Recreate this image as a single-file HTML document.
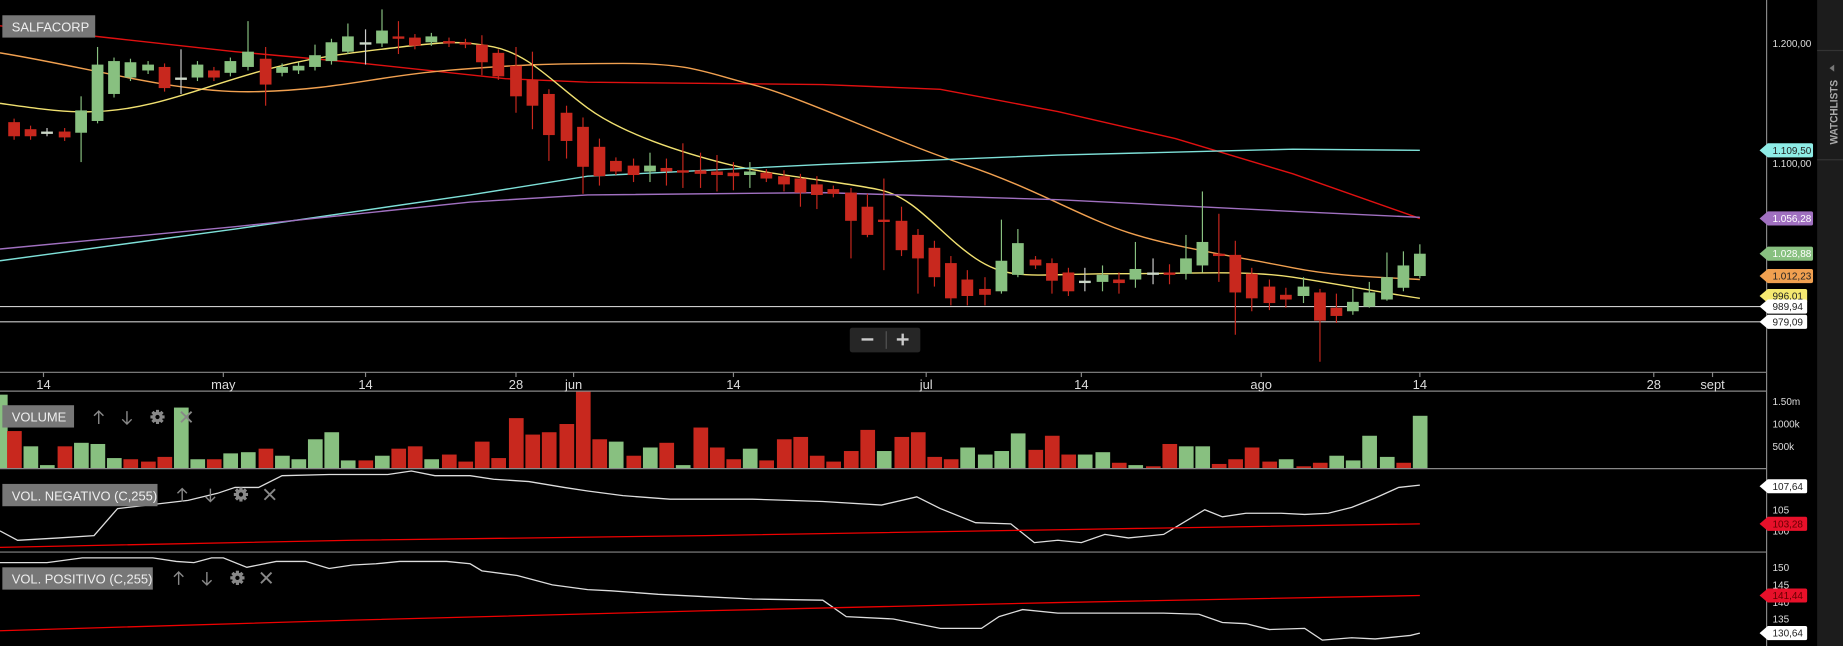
<!DOCTYPE html>
<html><head><meta charset="utf-8"><style>
html,body{margin:0;padding:0;background:#000;overflow:hidden}
svg{display:block}
text{font-family:"Liberation Sans",sans-serif}
</style></head><body>
<svg id="s" width="1843" height="646" viewBox="0 0 1568 550" preserveAspectRatio="none" xmlns="http://www.w3.org/2000/svg">
<rect width="1568" height="550" fill="#000"/>
<rect x="1546" y="0" width="22" height="550" fill="#1c1c1c"/>
<line x1="1546" y1="43" x2="1568" y2="43" stroke="#333"/>
<line x1="1546" y1="136" x2="1568" y2="136" stroke="#333"/>
<text transform="translate(1563.5,123) rotate(-90)" font-size="9" font-weight="bold" fill="#aaa" textLength="55" lengthAdjust="spacingAndGlyphs">WATCHLISTS</text>
<path d="M1556.5,58 l4,-3 v6z" fill="#777"/>
<g id="ma" fill="none" stroke-width="1.2">
<polyline stroke="#e01010" points="0,22 100,33 200,44 300,53 430,67 500,70 700,72 800,76 900,95 1000,118 1100,148 1208,186"/>
<path stroke="#f0a050" d="M0,45 C80,58 150,80 220,78 S320,65 380,60 S470,54 530,54 S600,62 640,72 S760,120 820,140 S920,185 960,198 S1060,220 1100,228 S1180,236 1208,238"/>
<path stroke="#f0e070" d="M0,88 C50,95 80,100 130,88 S220,55 300,45 S390,34 420,40 S470,70 500,92 S580,130 620,140 S720,155 750,162 S800,200 830,220 S880,233 950,233 S1060,230 1100,236 S1180,250 1208,254"/>
<polyline stroke="#7ee0d8" points="0,222 200,195 400,166 500,150 700,140 900,132 1100,127 1208,128"/>
<polyline stroke="#a070c0" points="0,212 200,193 400,172 500,166 700,164 900,170 1100,180 1208,185"/>
</g>
<line x1="0" y1="261" x2="1503" y2="261" stroke="#ccc"/>
<line x1="0" y1="274" x2="1503" y2="274" stroke="#ccc"/>
<g id="cd"></g>
<g id="vb"></g>
<line x1="1503" y1="0" x2="1503" y2="550" stroke="#888"/>
<line x1="0" y1="317" x2="1503" y2="317" stroke="#888"/>
<line x1="0" y1="333" x2="1503" y2="333" stroke="#888"/>
<line x1="0" y1="399" x2="1503" y2="399" stroke="#888"/>
<line x1="0" y1="470" x2="1503" y2="470" stroke="#888"/>
<g font-size="11" fill="#ddd" text-anchor="middle" id="dt"></g>
<rect x="723" y="279" width="60" height="21" rx="2" fill="#262626"/>
<line x1="754" y1="282" x2="754" y2="297" stroke="#555"/>
<path d="M733,289h10M763,289h10M768,284v10" stroke="#ccc" stroke-width="2"/>
<g font-size="8.5" fill="#ddd">
<text x="1508" y="40">1.200,00</text>
<text x="1508" y="142">1.100,00</text>
<text x="1508" y="345">1.50m</text>
<text x="1508" y="364">1000k</text>
<text x="1508" y="383">500k</text>
<text x="1508" y="437">105</text>
<text x="1508" y="455">100</text>
<text x="1508" y="486">150</text>
<text x="1508" y="501">145</text>
<text x="1508" y="516">140</text>
<text x="1508" y="530">135</text>
</g>
<g id="tags" font-size="8.5"></g>
<g font-size="11" fill="#eee">
<rect x="2" y="13" width="79" height="19" fill="#777"/><text x="10" y="27">SALFACORP</text>
<rect x="2" y="345" width="61" height="19" fill="#777"/><text x="10" y="359">VOLUME</text>
<rect x="2" y="412" width="132" height="19" fill="#777"/><text x="10" y="426">VOL. NEGATIVO (C,255)</text>
<rect x="2" y="483" width="128" height="19" fill="#777"/><text x="10" y="497">VOL. POSITIVO (C,255)</text>
</g>
<g id="ic" stroke="#888" fill="none" stroke-width="1.2"></g>
</svg>
<script>
const N='http://www.w3.org/2000/svg';
function el(p,t,a,tx){const e=document.createElementNS(N,t);for(const k in a)e.setAttribute(k,a[k]);if(tx)e.textContent=tx;document.getElementById(p).appendChild(e);return e;}
const C=[[12,'r',104,116],[26,'r',110,116],[40,'n',112,113],[55,'r',112,117],[69,'g',94,113,82,138],[83,'g',55,103,40,105],[97,'g',52,80],[111,'g',53,66],[126,'g',55,60],[140,'r',57,75],[154,'n',66,67,42,80],[168,'g',55,66],[182,'r',60,66],[196,'g',52,62],[211,'g',44,57,18,60],[226,'r',50,72,40,90],[240,'g',57,62],[254,'g',56,60],[268,'g',47,57,38,60],[282,'g',36,52],[296,'g',31,44,20,46],[311,'n',36,37,25,55],[325,'g',26,37,8,40],[339,'r',31,33,18,46],[353,'r',32,39],[367,'g',31,36],[382,'r',35,37],[396,'r',36,38],[410,'r',38,53,30,64],[424,'r',45,65],[439,'r',56,82,40,96],[453,'r',68,90,44,110],[467,'r',80,115,76,137],[482,'r',96,120,90,135],[496,'r',108,142,100,165],[510,'r',125,150,118,158],[524,'r',137,146],[539,'r',141,149,135,155],[553,'g',141,146,130,155],[567,'r',143,146,135,158],[581,'r',145,147,122,160],[596,'r',145,148,130,160],[610,'r',146,149,132,163],[624,'r',147,150,138,162],[638,'g',146,149,138,160],[652,'r',147,152],[667,'r',150,157,145,163],[681,'r',152,164,148,176],[695,'r',157,166,150,178],[709,'r',161,165],[724,'r',164,188,160,220],[738,'r',176,200,165,202],[752,'r',187,189,152,230],[767,'r',188,213,176,218],[781,'r',200,220,195,250],[795,'r',211,236,205,244],[809,'r',224,254,218,260],[823,'r',238,252,230,260],[838,'r',246,251,236,260],[852,'g',222,248,187,250],[866,'g',207,234,195,236],[881,'r',221,226],[895,'r',224,239,220,250],[909,'r',232,248,228,252],[923,'n',239,240,228,248],[938,'g',234,240,226,248],[952,'r',238,241,232,250],[966,'g',229,238,206,245],[981,'n',232,233,220,242],[995,'r',232,234,225,242],[1009,'g',220,233,200,238],[1023,'g',206,226,163,232],[1037,'r',216,218,182,240],[1051,'r',217,249,205,285],[1065,'r',233,254,228,265],[1080,'r',244,258,238,264],[1094,'r',251,255,245,262],[1109,'g',244,252,236,258],[1123,'r',249,273,246,308],[1137,'r',262,269,250,275],[1151,'g',257,265,246,268],[1165,'g',249,261,240,262],[1180,'g',236,255,215,256],[1194,'g',226,245,214,248],[1208,'g',216,235,208,237]];
const col={r:'#c8281e',g:'#88c080',n:'#ccd8c8'};
C.forEach(c=>{const[x,t,a,b,h,l]=c;const hi=h||a-3,lo=l||b+3;
el('cd','line',{x1:x,y1:hi,x2:x,y2:lo,stroke:t=='n'?'#ccc':(t=='r'?'#c8281e':'#88c080'),'stroke-width':1});
el('cd','rect',{x:x-5,y:a,width:10,height:Math.max(2,b-a),fill:col[t]});});
const V=[[0,'g',336],[12,'r',367],[26,'g',380],[40,'g',396],[55,'r',380],[69,'g',377],[83,'g',378],[97,'g',390],[111,'r',391],[126,'r',393],[140,'r',389],[154,'g',347],[168,'g',391],[182,'r',391],[196,'g',386],[211,'g',385],[226,'r',382],[240,'g',388],[254,'g',391],[268,'g',374],[282,'g',368],[296,'g',392],[311,'r',392],[325,'g',388],[339,'r',382],[353,'r',380],[367,'g',391],[382,'r',387],[396,'r',393],[410,'r',376],[424,'r',390],[439,'r',356],[453,'r',370],[467,'r',368],[482,'r',361],[496,'r',333],[510,'r',374],[524,'g',376],[539,'r',388],[553,'g',381],[567,'r',377],[581,'g',396],[596,'r',364],[610,'r',381],[624,'r',391],[638,'g',382],[652,'r',392],[667,'r',374],[681,'r',372],[695,'r',388],[709,'r',393],[724,'r',384],[738,'r',366],[752,'g',384],[767,'r',372],[781,'r',368],[795,'r',389],[809,'r',391],[823,'g',381],[838,'g',387],[852,'g',384],[866,'g',369],[881,'r',383],[895,'r',371],[909,'r',387],[923,'g',387],[938,'g',385],[952,'r',394],[966,'g',396],[981,'r',397],[995,'r',378],[1009,'g',380],[1023,'g',380],[1037,'r',395],[1051,'r',391],[1065,'r',381],[1080,'r',393],[1094,'g',391],[1109,'r',397],[1123,'r',394],[1137,'g',388],[1151,'g',392],[1165,'g',371],[1180,'g',389],[1194,'r',394],[1208,'g',354]];
V.forEach(v=>el('vb','rect',{x:v[0]-6,y:v[2],width:12.5,height:399-v[2],fill:col[v[1]]}));
[[37,'14'],[190,'may'],[311,'14'],[439,'28'],[488,'jun'],[624,'14'],[788,'jul'],[920,'14'],[1073,'ago'],[1208,'14'],[1407,'28'],[1457,'sept']].forEach(d=>{el('dt','text',{x:d[0],y:331},d[1]);el('dt','line',{x1:d[0],y1:317,x2:d[0],y2:321,stroke:'#888'});});
function pl(pts,stroke){el('vb','polyline',{points:pts,fill:'none',stroke:stroke,'stroke-width':1.1});}
pl('0,452 15,460 50,458 80,456 100,433 160,426 185,420 200,415 220,415 240,405 280,404 330,404 350,401 370,405 400,405 420,408 450,410 480,415 500,418 530,422 570,425 640,425 700,427 750,430 780,423 800,433 830,445 860,446 880,462 900,460 920,462 940,455 960,458 990,455 1010,443 1025,434 1040,440 1060,437 1090,437 1110,438 1130,437 1150,432 1170,424 1190,415 1208,413','#ddd');
pl('0,466 300,460 600,456 900,451 1208,446','#e00');
pl('0,479 40,479 70,475 100,475 130,475 150,478 165,479 180,475 190,475 210,483 235,478 260,478 280,484 300,481 320,480 340,478 360,478 380,478 400,480 410,486 440,490 470,498 500,502 520,503 560,506 600,508 640,510 700,511 720,525 760,527 800,535 835,535 850,525 870,519 900,522 930,522 990,522 1020,523 1040,530 1060,531 1080,536 1110,535 1125,545 1150,543 1170,544 1200,541 1208,539','#ddd');
pl('0,537 300,528 600,520 900,513 1208,507','#e00');
function tag(y,bg,fg,t,w){el('tags','path',{d:`M1497,${y} l7,-6 h${w} a1.5,1.5 0 0 1 1.5,1.5 v9 a1.5,1.5 0 0 1 -1.5,1.5 h-${w} z`,fill:bg});el('tags','text',{x:1508,y:y+3,fill:fg},t);}
tag(252,'#f5e870','#222','996,01',32);tag(128,'#8eece6','#222','1.109,50',37);tag(186,'#a070c0','#fff','1.056,28',37);tag(216,'#88c080','#fff','1.028,88',37);tag(235,'#f0a050','#222','1.012,23',37);
tag(261,'#fff','#222','989,94',32);tag(274,'#fff','#222','979,09',32);
tag(414,'#fff','#222','107,64',32);tag(446,'#e8102a','#600','103,28',32);tag(507,'#e8102a','#600','141,44',32);tag(539,'#fff','#222','130,64',32);
function icons(x,y){el('ic','path',{d:`M${x},${y+6}v-11m-4,4l4,-4l4,4M${x+24},${y-5}v11m-4,-4l4,4l4,-4`});
const gx=x+50;
for(let i=0;i<8;i++){el('ic','rect',{x:gx-1.3,y:y-6,width:2.6,height:12,fill:'#888',stroke:'none',transform:`rotate(${i*45} ${gx} ${y})`});}
el('ic','circle',{cx:gx,cy:y,r:4.5,fill:'#888',stroke:'none'});el('ic','circle',{cx:gx,cy:y,r:1.8,fill:'#000',stroke:'none'});
el('ic','path',{d:`M${x+70},${y-4.5}l9,9m0,-9l-9,9`,'stroke-width':1.6});}
icons(84,355);icons(155,421);icons(152,492);
</script>
</body></html>
